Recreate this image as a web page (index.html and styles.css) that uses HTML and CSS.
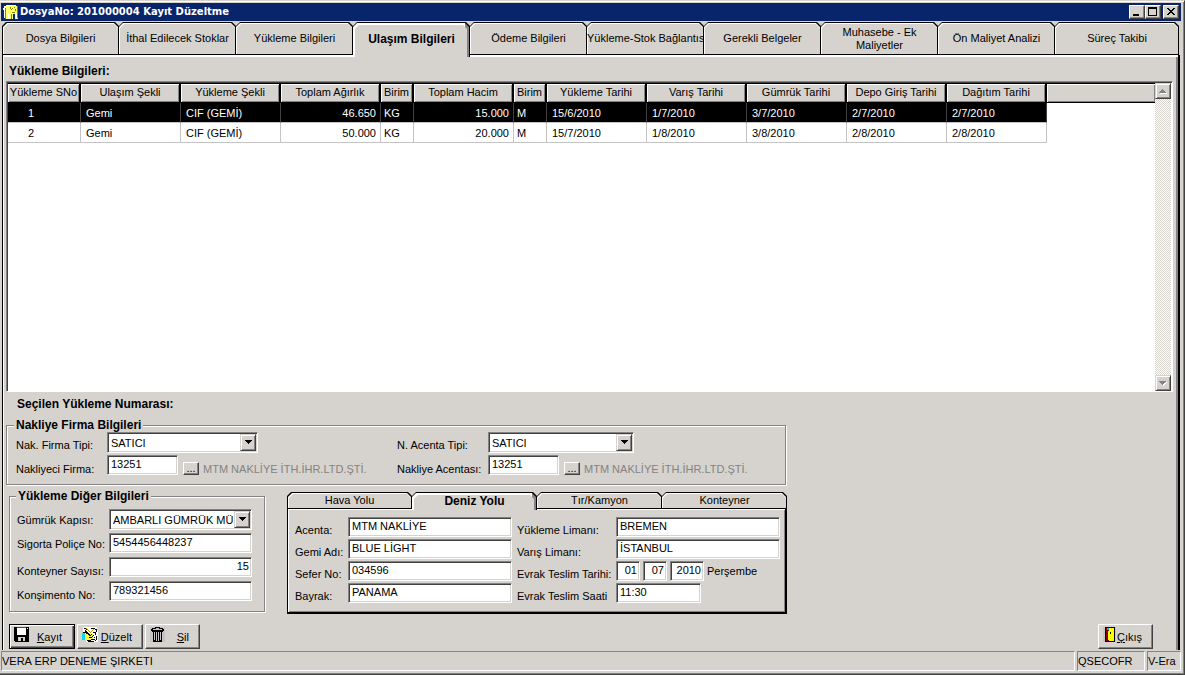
FILE: index.html
```html
<!DOCTYPE html>
<html lang="tr">
<head>
<meta charset="utf-8">
<title>DosyaNo: 201000004 Kayıt Düzeltme</title>
<link rel="stylesheet" href="styles.css">
</head>
<body>
<div class="window">
  <header class="titlebar">
    <svg class="app-icon" width="16" height="16" viewBox="0 0 16 16" shape-rendering="crispEdges" aria-hidden="true">
      <path fill="#ffff63" d="M3 2h5v-1h5v1h2v13h-3v-5h-2v5h-4v-4h-1v4h-3v-12z"/>
      <path fill="#fff" d="M0 4h1v-2h2v-1h5v1h-5v2h-1v10h-1v-8h-1zM6 1h2v1h-2zM10 6h1v1h-1zM13 10h1v5h-1zM5 10h1v5h-1z"/>
      <path fill="#848200" d="M2 4h1v11h-1zM7 3h1v2h-1zM8 5h1v1h-1zM9 4h1v1h-1zM11 3h1v1h-1zM12 5h1v2h-1zM9 8h3v1h-3zM8 10h1v5h-1zM14 2h1v12h-1z"/>
    </svg>
    <h1>DosyaNo: 201000004 Kayıt Düzeltme</h1>
    <div class="caption-buttons">
      <button type="button" aria-label="Simge durumuna küçült"><svg width="12" height="10" shape-rendering="crispEdges"><path d="M2 7h6v2h-6z"/></svg></button>
      <button type="button" aria-label="Ekranı kapla"><svg width="12" height="10" shape-rendering="crispEdges"><path fill-rule="evenodd" d="M1 0h9v9h-9zM2 2v6h7v-6z"/></svg></button>
      <button type="button" class="close" aria-label="Kapat"><svg width="12" height="10" shape-rendering="crispEdges"><path d="M2 1h2v1h1v1h2v-1h1v-1h2v1h-1v1h-1v1h-1v1h1v1h1v1h1v1h-2v-1h-1v-1h-2v1h-1v1h-2v-1h1v-1h1v-1h1v-1h-1v-1h-1v-1h-1z"/></svg></button>
    </div>
  </header>

  <nav class="tabs main-tabs">
    <button type="button" class="tab first"><span>Dosya Bilgileri</span></button>
    <button type="button" class="tab tight"><span>İthal Edilecek Stoklar</span></button>
    <button type="button" class="tab"><span>Yükleme Bilgileri</span></button>
    <button type="button" class="tab active"><span>Ulaşım Bilgileri</span></button>
    <button type="button" class="tab"><span>Ödeme Bilgileri</span></button>
    <button type="button" class="tab tight"><span>Yükleme-Stok Bağlantısı</span></button>
    <button type="button" class="tab"><span>Gerekli Belgeler</span></button>
    <button type="button" class="tab"><span>Muhasebe - Ek Maliyetler</span></button>
    <button type="button" class="tab"><span>Ön Maliyet Analizi</span></button>
    <button type="button" class="tab last"><span>Süreç Takibi</span></button>
  </nav>

  <main class="page">
    <h2 class="grid-title">Yükleme Bilgileri:</h2>
    <div class="grid-box">
      <div class="grid-scroll">
        <table>
          <colgroup>
            <col class="c-no"><col class="c-std"><col class="c-std"><col class="c-std"><col class="c-unit"><col class="c-std"><col class="c-unit"><col class="c-std"><col class="c-std"><col class="c-std"><col class="c-std"><col class="c-std"><col>
          </colgroup>
          <thead>
            <tr><th>Yükleme SNo</th><th>Ulaşım Şekli</th><th>Yükleme Şekli</th><th>Toplam Ağırlık</th><th>Birim</th><th>Toplam Hacim</th><th>Birim</th><th>Yükleme Tarihi</th><th>Varış Tarihi</th><th>Gümrük Tarihi</th><th>Depo Giriş Tarihi</th><th>Dağıtım Tarihi</th><th class="filler"></th></tr>
          </thead>
          <tbody>
            <tr class="selected"><td class="no">1</td><td>Gemi</td><td>CIF (GEMİ)</td><td class="num">46.650</td><td class="unit">KG</td><td class="num">15.000</td><td class="unit">M</td><td>15/6/2010</td><td>1/7/2010</td><td>3/7/2010</td><td>2/7/2010</td><td>2/7/2010</td><td class="filler"></td></tr>
            <tr><td class="no">2</td><td>Gemi</td><td>CIF (GEMİ)</td><td class="num">50.000</td><td class="unit">KG</td><td class="num">20.000</td><td class="unit">M</td><td>15/7/2010</td><td>1/8/2010</td><td>3/8/2010</td><td>2/8/2010</td><td>2/8/2010</td><td class="filler"></td></tr>
          </tbody>
        </table>
      </div>
      <div class="scrollbar">
        <button type="button" aria-label="Yukarı kaydır"><svg width="12" height="12" shape-rendering="crispEdges"><path fill="#fff" d="M3 8h7v1h-7z"/><path fill="#848284" d="M5 4h1v1h1v1h1v1h1v1h-7v-1h1v-1h1v-1h1z"/></svg></button>
        <button type="button" aria-label="Aşağı kaydır"><svg width="12" height="12" shape-rendering="crispEdges"><path fill="#fff" d="M9 5h1v1h-1v1h-1v1h-1v1h-1v-2h1v-1h2z"/><path fill="#848284" d="M2 4h7v1h-1v1h-1v1h-1v1h-1v-1h-1v-1h-1v-1h-1z"/></svg></button>
      </div>
    </div>

    <p class="selected-no">Seçilen Yükleme Numarası:</p>

    <fieldset class="carrier">
      <legend>Nakliye Firma Bilgileri</legend>
      <div class="carrier-groups">
        <div class="carrier-grid">
          <label for="firm-type">Nak. Firma Tipi:</label>
          <div class="combo firm-combo"><select id="firm-type"><option>SATICI</option></select><i class="arrow"><svg width="9" height="5" shape-rendering="crispEdges"><path d="M1 0h7v1h-1v1h-1v1h-1v1h-1v-1h-1v-1h-1v-1h-1z"/></svg></i></div>
          <label for="firm">Nakliyeci Firma:</label>
          <div class="lookup"><input id="firm" type="text" value="13251"><button type="button" class="dots">...</button><span>MTM NAKLİYE İTH.İHR.LTD.ŞTİ.</span></div>
        </div>
        <div class="carrier-grid">
          <label for="agent-type">N. Acenta Tipi:</label>
          <div class="combo agent-combo"><select id="agent-type"><option>SATICI</option></select><i class="arrow"><svg width="9" height="5" shape-rendering="crispEdges"><path d="M1 0h7v1h-1v1h-1v1h-1v1h-1v-1h-1v-1h-1v-1h-1z"/></svg></i></div>
          <label for="agent">Nakliye Acentası:</label>
          <div class="lookup"><input id="agent" type="text" value="13251"><button type="button" class="dots">...</button><span>MTM NAKLİYE İTH.İHR.LTD.ŞTİ.</span></div>
        </div>
      </div>
    </fieldset>

    <div class="details">
      <fieldset class="other">
        <legend>Yükleme Diğer Bilgileri</legend>
        <div class="other-grid">
          <label for="customs">Gümrük Kapısı:</label>
          <div class="combo"><select id="customs"><option>AMBARLI GÜMRÜK MÜDÜRLÜĞÜ</option></select><i class="arrow"><svg width="9" height="5" shape-rendering="crispEdges"><path d="M1 0h7v1h-1v1h-1v1h-1v1h-1v-1h-1v-1h-1v-1h-1z"/></svg></i></div>
          <label for="policy">Sigorta Poliçe No:</label>
          <input id="policy" type="text" value="5454456448237">
          <label for="containers" class="low">Konteyner Sayısı:</label>
          <input id="containers" type="text" class="right" value="15">
          <label for="bill" class="low">Konşimento No:</label>
          <input id="bill" type="text" value="789321456">
        </div>
      </fieldset>

      <section class="transport">
        <nav class="tabs sub-tabs">
          <button type="button" class="tab first"><span>Hava Yolu</span></button>
          <button type="button" class="tab active"><span>Deniz Yolu</span></button>
          <button type="button" class="tab"><span>Tır/Kamyon</span></button>
          <button type="button" class="tab"><span>Konteyner</span></button>
        </nav>
        <div class="transport-page">
          <div class="sea-grid ship">
            <label for="acenta">Acenta:</label><input id="acenta" type="text" value="MTM NAKLİYE">
            <label for="ship">Gemi Adı:</label><input id="ship" type="text" value="BLUE LİGHT">
            <label for="voyage">Sefer No:</label><input id="voyage" type="text" value="034596">
            <label for="flag">Bayrak:</label><input id="flag" type="text" value="PANAMA">
          </div>
          <div class="sea-grid port">
            <label for="load-port">Yükleme Limanı:</label><input id="load-port" type="text" value="BREMEN">
            <label for="arrival-port">Varış Limanı:</label><input id="arrival-port" type="text" value="İSTANBUL">
            <label for="day">Evrak Teslim Tarihi:</label>
            <div class="date"><input id="day" type="text" class="right" value="01"><input type="text" class="right" aria-label="Ay" value="07"><input type="text" class="right year" aria-label="Yıl" value="2010"><span>Perşembe</span></div>
            <label for="time">Evrak Teslim Saati</label><input id="time" type="text" class="time" value="11:30">
          </div>
        </div>
      </section>
    </div>

    <div class="actions">
      <button type="button" class="action default">
        <svg width="16" height="16" viewBox="0 0 16 16" shape-rendering="crispEdges"><path d="M0 0h15v15h-14v-1h-1z"/><path fill="#fff" d="M3 1h9v7h-9zM13 1h1v1h-1z"/><path fill="#f00" d="M3 0h9v1h-9z"/><path fill="#d6d3ce" d="M4 10h7v4h-7z"/><path d="M7 11h2v3h-2z"/></svg>
        <span><u>K</u>ayıt</span></button>
      <button type="button" class="action edit">
        <svg width="16" height="16" viewBox="0 0 16 16" shape-rendering="crispEdges"><path fill="#fff" d="M1 0h14v3h1v12h-12v-5h-3z"/><path d="M2 1h2v1h-2zM4 2h1v1h-1zM9 1h4v1h-4zM13 2h2v1h-2zM14 3h1v2h-1zM13 5h1v3h-1zM11 5h2v1h-2zM11 8h1v1h-1zM14 9h1v4h-1zM12 10h1v1h-1zM6 14h6v1h-6zM13 13h1v1h-1zM1 5h3v1h-3zM9 12h4v1h-4z"/><path fill="#ffff42" d="M3 7h2v-1h4v1h2v5h-2v1h-6z"/><path d="M3 3h1v1h1v1h1v1h1v1h1v1h1v1h-2v-1h-1v-1h-1v-1h-1v-1h-1zM9 7h1v1h-1zM7 10h3v1h-3zM10 9h1v1h-1zM5 13h4v1h-4zM4 6h1v1h-1z"/><path fill="#c69a00" d="M4 1h1v1h1v1h1v1h1v1h1v1h-1v-1h-1v-1h-1v-1h-1v-1h-1zM11 2h1v1h-1v1h-1v1h-1v-1h1v-1h1z"/><path fill="#00dfe7" d="M0 6h3v7h-3z"/></svg>
        <span><u>D</u>üzelt</span></button>
      <button type="button" class="action delete">
        <svg width="16" height="16" viewBox="0 0 16 16" shape-rendering="crispEdges"><path fill="#c6c3c6" d="M0 0h15v15h-15z"/><path d="M5 0h5v1h3v1h1v2h-13v-2h1v-1h3zM2 4h11v1h-1v10h-9v-10h-1z"/><path fill="#c6c3c6" d="M6 1h3v1h-3zM3 2h9v1h-9zM4 5h1v8h-1zM6 5h1v9h-1zM8 5h1v9h-1zM10 5h1v8h-1z"/></svg>
        <span><u>S</u>il</span></button>
      <button type="button" class="action exit">
        <svg width="14" height="16" viewBox="0 0 14 16" shape-rendering="crispEdges"><path fill="#c6c3c6" d="M0 0h13v15h-13z"/><path d="M2 0h10v15h-10z"/><path fill="#840000" d="M3 1h3v13h-3z"/><path fill="#00bfc6" d="M4 1h2v2h-2z"/><path fill="#ff0" d="M6 1h5v13h-5v-1h-1v-9h1z"/><path d="M7 5h1v2h-1z"/></svg>
        <span><u>Ç</u>ıkış</span></button>
    </div>
  </main>

  <footer class="status">
    <span class="company">VERA ERP DENEME ŞIRKETI</span>
    <span class="user">QSECOFR</span>
    <span class="product">V-Era</span>
  </footer>
</div>
</body>
</html>
```

FILE: styles.css
```css
:root {
  --face: #d6d3ce;
  --shadow: #848284;
  --dark: #424142;
}
* { box-sizing: border-box; }
body {
  margin: 0;
  background: var(--face);
  color: #000;
  font: 11px/14px "Liberation Sans", Arial, sans-serif;
}
button, input, select { font: inherit; color: inherit; margin: 0; border-radius: 0; }
svg { display: block; flex: none; }

.window {
  display: flex;
  flex-direction: column;
  min-height: 100vh;
  padding: 1px 1px 1px 0;
  border-top: 1px solid var(--face);
  border-right: 1px solid var(--dark);
  border-bottom: 1px solid var(--dark);
  box-shadow: inset 0 1px #fff, inset -1px -1px var(--shadow);
}

/* Title bar */
.titlebar {
  display: flex;
  align-items: center;
  height: 18px;
  margin: 1px 2px 0 1px;
  padding: 0 2px;
  background: #08246b;
  color: #fff;
}
.titlebar h1 { margin: 0 0 0 1px; font: bold 10px/18px "DejaVu Sans", Verdana, sans-serif; }
.caption-buttons { display: flex; margin-left: auto; }
.caption-buttons button {
  width: 16px;
  height: 14px;
  padding: 0 1px;
  background: var(--face);
  border: 1px solid;
  border-color: #fff var(--dark) var(--dark) #fff;
  box-shadow: inset -1px -1px var(--shadow);
}
.caption-buttons .close { margin-left: 2px; }

/* Tab strips */
.tabs { display: flex; position: relative; z-index: 1; }
.tab {
  --cut: polygon(0 4px, 4px 0, calc(100% - 4px) 0, 100% 4px, 100% 100%, 0 100%);
  position: relative;
  isolation: isolate;
  flex: 117 1 0;
  min-width: 0;
  padding: 0;
  border: 0;
  background: #000;
  clip-path: var(--cut);
  line-height: 13px;
}
.tab::before, .tab::after { content: ""; position: absolute; clip-path: var(--cut); }
.tab::before { z-index: -2; inset: 1px 1px 1px 0; background: #fff; }
.tab::after { z-index: -1; inset: 2px 1px 1px 1px; background: var(--face); }
.tab span { display: block; padding: 0 9px; }
.tab.tight span { padding: 0; white-space: nowrap; }
.tab.first::before { left: 1px; }
.tab.first::after { left: 2px; }
.tab.active { font-weight: bold; font-size: 12px; }
.tab.active::before { inset: 1px 1px 0 0; background: linear-gradient(90deg, #fff calc(100% - 4px), var(--shadow) 0); }
.tab.active::after { inset: 3px 3px 0 2px; }
.main-tabs { height: 33px; margin: 1px 4px 0 2px; }
.main-tabs .last { flex-grow: 124; }
.main-tabs .active { margin-bottom: -2px; }

/* Page */
.page {
  flex: 1;
  display: flex;
  flex-direction: column;
  margin-right: 3px;
  margin-left: 2px;
  padding: 9px 5px 1px 3px;
  border-left: 1px solid #000;
  border-right: 2px solid #000;
  box-shadow: inset 1px 2px #fff, inset -2px 0 var(--shadow);
}
h2, .selected-no, legend { font-size: 12px; font-weight: bold; line-height: 14px; }
.grid-title { margin: 0 0 3px 3px; }
.selected-no { margin: 5px 0 7px 11px; }

/* Shipment grid */
.grid-box {
  flex: 1;
  display: flex;
  min-height: 160px;
  background: #fff;
  border: 1px solid;
  border-color: var(--shadow) #fff #fff var(--shadow);
  box-shadow: inset 1px 1px var(--dark);
  padding: 1px 1px 0 1px;
}
.grid-scroll { flex: 1; min-width: 0; overflow: hidden; }
table { width: 100%; table-layout: fixed; border-collapse: separate; border-spacing: 0; }
.c-no { width: 73px; }
.c-std { width: 100px; }
.c-unit { width: 33px; }
th {
  height: 20px;
  padding: 0 0 2px;
  overflow: hidden;
  white-space: nowrap;
  font-weight: normal;
  background: var(--face);
  border-top: 1px solid #000;
  border-right: 2px solid #000;
  border-bottom: 1px solid #000;
  box-shadow: inset 1px 1px #fff, inset -1px -1px var(--shadow);
}
td {
  height: 20px;
  padding: 0 4px 0 5px;
  white-space: nowrap;
  border-right: 1px solid #c6c3c6;
  border-bottom: 1px solid #c6c3c6;
}
th.filler, td.filler { border-right: 0; }
td.filler { border-bottom: 0; background: #fff; }
td.no { padding-left: 20px; }
td.num { text-align: right; }
td.unit { padding: 0 3px; }
.selected td { color: #fff; }
.selected td:not(.filler) { background: #000; border-right-color: var(--dark); }
.scrollbar {
  display: flex;
  flex-direction: column;
  justify-content: space-between;
  width: 16px;
  background: repeating-conic-gradient(#fff 0 25%, var(--face) 0 50%) 0 0 / 2px 2px;
}
.scrollbar button {
  height: 16px;
  padding: 0 1px;
  background: var(--face);
  border: 1px solid;
  border-color: var(--face) var(--dark) var(--dark) var(--face);
  box-shadow: inset 1px 1px #fff, inset -1px -1px var(--shadow);
}

/* Form controls */
input, select {
  width: 100%;
  height: 20px;
  padding: 0 2px 2px;
  background: #fff;
  border: 1px solid;
  border-color: var(--shadow) #fff #fff var(--shadow);
  box-shadow: inset 1px 1px var(--dark), inset -1px -1px var(--face);
}
input { padding-left: 3px; }
.right { text-align: right; }
.combo { position: relative; height: 21px; }
select { appearance: none; height: 21px; padding: 0 18px 0 3px; }
.arrow {
  position: absolute;
  top: 2px;
  right: 2px;
  bottom: 2px;
  width: 16px;
  padding: 5px 3px;
  background: var(--face);
  border: 1px solid;
  border-color: var(--face) var(--dark) var(--dark) var(--face);
  box-shadow: inset 1px 1px #fff, inset -1px -1px var(--shadow);
  pointer-events: none;
}
fieldset {
  min-width: 0;
  margin: 0;
  padding: 0;
  border: 1px solid var(--shadow);
  box-shadow: 1px 1px #fff, inset 1px 1px #fff;
}
legend { margin-left: 7px; padding: 0 2px; background: var(--face); }

/* Carrier */
.carrier { width: 780px; max-width: 100%; }
.carrier-groups { display: grid; grid-template-columns: 381px 1fr; padding: 0 0 7px 9px; }
.carrier-grid {
  display: grid;
  grid-template-columns: 91px 1fr;
  grid-template-rows: 21px 22px;
  row-gap: 2px;
}
.carrier-grid label { align-self: end; line-height: 16px; white-space: nowrap; }
.firm-combo { width: 151px; }
.agent-combo { width: 146px; }
.lookup { display: flex; align-items: flex-end; color: var(--shadow); white-space: nowrap; }
.lookup input { align-self: flex-start; width: 71px; color: #000; }
.lookup span { margin-left: 4px; line-height: 16px; }
.dots {
  width: 16px;
  height: 13px;
  margin: 0 0 2px 5px;
  padding: 0;
  color: #000;
  line-height: 9px;
  background: var(--face);
  border: 1px solid;
  border-color: #fff var(--dark) var(--dark) #fff;
  box-shadow: inset -1px -1px var(--shadow);
}

/* Lower details */
.details { display: flex; align-items: flex-start; gap: 22px; margin: 4px 0 0 3px; }
.other { width: 256px; }
.other legend { margin-left: 6px; }
.other-grid {
  display: grid;
  grid-template-columns: 92px 1fr;
  grid-template-rows: repeat(3, 24px) 28px;
  padding: 6px 12px 2px 7px;
}
.other-grid label { line-height: 22px; white-space: nowrap; }
.other-grid .low { line-height: 28px; }

.transport { width: 500px; margin-top: 3px; }
.sub-tabs { height: 17px; }
.sub-tabs .active { margin-bottom: -1px; }
.transport-page {
  display: grid;
  grid-template-columns: 217px 263px;
  column-gap: 5px;
  padding: 8px 4px 7px 7px;
  border: 1px solid #000;
  border-top: 0;
  border-right-width: 2px;
  border-bottom-width: 2px;
  box-shadow: inset 1px 1px #fff, inset -1px -1px var(--shadow);
}
.sea-grid { display: grid; grid-auto-rows: 22px; white-space: nowrap; }
.sea-grid label { line-height: 26px; }
.ship { grid-template-columns: 53px 1fr; }
.port { grid-template-columns: 99px 1fr; }
.date { display: flex; gap: 3px; }
.date input { width: 24px; }
.date .year { width: 34px; }
.date span { line-height: 20px; }
.time { width: 85px; }

/* Action buttons */
.actions { display: flex; gap: 2px; margin: 10px 20px 0 3px; }
.action {
  display: flex;
  align-items: flex-start;
  justify-content: space-between;
  height: 25px;
  padding: 2px 10px 0 4px;
  background: var(--face);
  border: 1px solid;
  border-color: #fff var(--dark) var(--dark) #fff;
  box-shadow: inset -1px -1px var(--shadow);
}
.action span { padding-top: 3px; }
.action.default { width: 66px; padding-right: 12px; border-color: #000; box-shadow: inset 1px 1px #fff, inset -1px -1px var(--dark), inset -2px -2px var(--shadow); }
.action.edit { width: 66px; }
.action.delete { width: 55px; }
.action.exit { width: 55px; margin-left: auto; }

/* Status bar */
.status { display: flex; gap: 2px; margin: 1px 2px 2px 1px; }
.status span {
  height: 20px;
  line-height: 18px;
  white-space: nowrap;
  overflow: hidden;
  border: 1px solid;
  border-color: var(--shadow) #fff #fff var(--shadow);
}
.company { flex: 1; }
.user { width: 68px; }
.product { width: 34px; }
```
